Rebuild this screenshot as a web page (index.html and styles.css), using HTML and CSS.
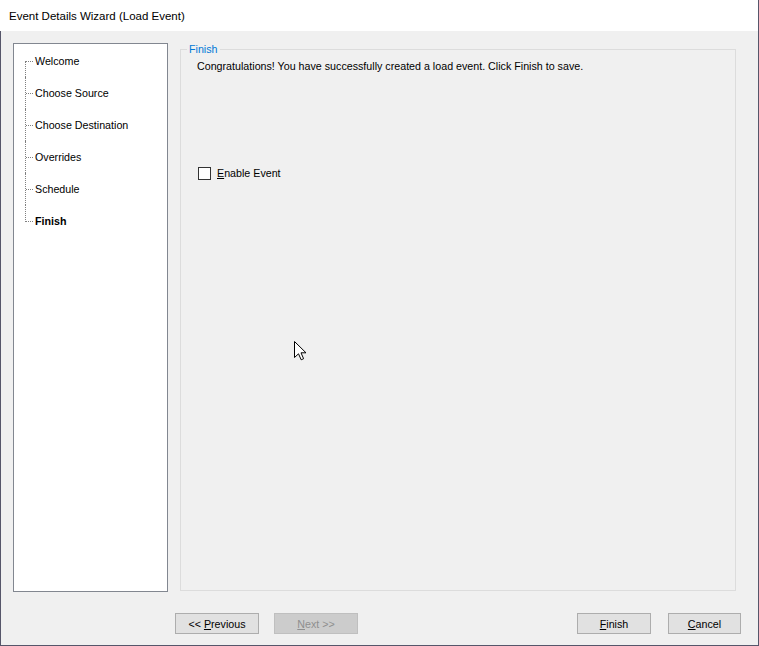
FILE: index.html
```html
<!DOCTYPE html>
<html lang="en">
<head>
  <meta charset="UTF-8">
  <title>Event Details Wizard (Load Event)</title>
  <link rel="stylesheet" href="styles.css">
</head>
<body>

<div class="window">
  <div class="titlebar">Event Details Wizard (Load Event)</div>

  <div class="client">
    <div class="main">
      <ul class="steps">
        <li>Welcome</li>
        <li>Choose Source</li>
        <li>Choose Destination</li>
        <li>Overrides</li>
        <li>Schedule</li>
        <li class="current">Finish</li>
      </ul>

      <fieldset class="page">
        <legend>Finish</legend>
        <p class="intro">Congratulations! You have successfully created a load event. Click Finish to save.</p>
        <label class="check">
          <span class="box"></span>
          <span><u>E</u>nable Event</span>
        </label>
      </fieldset>
    </div>

    <div class="buttons">
      <button class="btn prev">&lt;&lt; <u>P</u>revious</button>
      <button class="btn next" disabled><u>N</u>ext &gt;&gt;</button>
      <span class="spacer"></span>
      <button class="btn finish"><u>F</u>inish</button>
      <button class="btn cancel"><u>C</u>ancel</button>
    </div>
  </div>

  <svg class="cursor" width="13" height="20" viewBox="0 0 13 20">
    <path d="M0.5 0.5 L0.5 16.5 L4.5 12.8 L7.2 18.8 L9.6 17.7 L7 11.8 L12 11.8 Z" fill="#fff" stroke="#000" stroke-width="1"/>
  </svg>
</div>

</body>
</html>
```

FILE: styles.css
```css
body { margin: 0; font-family: "Liberation Sans", Arial, sans-serif; font-size: 10.7px; color: #000; background: #f0f0f0; }
.window { position: relative; width: 759px; height: 646px; box-sizing: border-box; border-right: 1px solid #56566a; border-bottom: 1px solid #56566a; background: #f0f0f0; overflow: hidden; }
.titlebar { height: 31px; line-height: 33px; padding-left: 9px; background: #fff; font-family: "Liberation Sans", Arial, sans-serif; font-size: 11.5px; color: #000; }
.client { height: 614px; box-sizing: border-box; border-left: 1px solid #56566a; padding: 12px 0 0 12px; }
.main { display: flex; gap: 12px; height: 548px; margin-right: 22px; }

.steps { list-style: none; margin: 0; padding: 1px 0 0 0; width: 155px; box-sizing: border-box; border: 1px solid #828790; background: #fff; height: 549px; }
.steps li { position: relative; height: 32px; line-height: 32px; padding-left: 21px; white-space: nowrap; }
.steps li::before { content: ""; position: absolute; left: 12px; width: 7px; top: 16px; border-top: 1px dotted #808080; }
.steps li::after { content: ""; position: absolute; left: 11px; top: 0; bottom: 0; border-left: 1px dotted #808080; }
.steps li:first-child::after { top: 16px; }
.steps li:last-child::after { bottom: 15px; }
.steps li.current { font-weight: bold; }

.page { flex: 1; margin: 0; padding: 0 0 0 6px; border: 1px solid #dcdcdc; min-width: 0; }
.page legend { padding: 0 2px; color: #0078d7; line-height: 13px; }
.intro { margin: 4px 0 0 10px; line-height: 13px; }
.check { display: flex; align-items: center; gap: 6px; margin: 94px 0 0 11px; line-height: 13px; }
.box { width: 13px; height: 13px; box-sizing: border-box; border: 1px solid #333; background: #fff; }

.buttons { display: flex; margin: 22px 17px 0 162px; }
.btn { height: 21px; width: 84px; padding: 0; font-family: inherit; font-size: 10.7px; color: #000; background: #e1e1e1; border: 1px solid #adadad; border-radius: 0; }
.btn.next { margin-left: 15px; background: #cccccc; border-color: #bfbfbf; color: #8f8f8f; }
.spacer { flex: 1; }
.btn.finish { width: 74px; }
.btn.cancel { width: 73px; margin-left: 17px; }

.cursor { position: absolute; left: 294px; top: 341px; }
```
